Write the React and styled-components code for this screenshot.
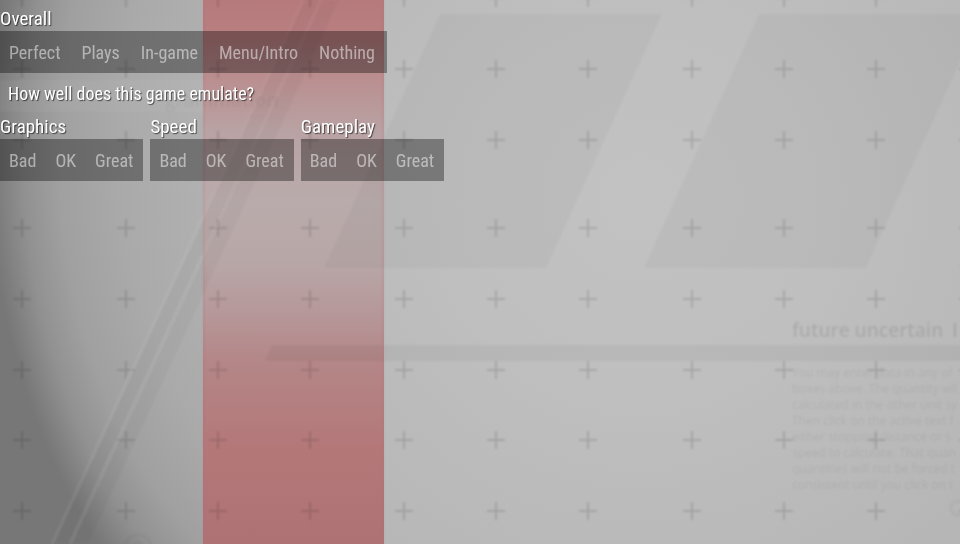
import React from 'react';
import styled, { createGlobalStyle } from 'styled-components';

const OVERALL = ['Perfect', 'Plays', 'In-game', 'Menu/Intro', 'Nothing'];
const RATING = ['Bad', 'OK', 'Great'];
const CATEGORIES = ['Graphics', 'Speed', 'Gameplay'];

const CROSS_X = [22, 126, 218, 310, 404, 496, 588, 692, 784, 876, 968];
const CROSS_Y = [-2, 69, 140, 228, 299, 370, 440, 511];

const SMALL_PRINT = [
  'You may enter data in any of',
  'boxes above. The quantity wil',
  'calculated in the other unit sy',
  'Then click on the active text f',
  'either stopping distance or s',
  'speed to calculate. That quan',
  'quantities will not be forced t',
  'consistent until you click on t',
];

const Backdrop = () => (
  <Canvas viewBox="0 0 960 544" preserveAspectRatio="xMinYMin slice" aria-hidden="true">
    <defs>
      <radialGradient id="base" gradientUnits="userSpaceOnUse" cx="640" cy="200" r="480">
        <stop offset="0" stopColor="#c2c2c2" />
        <stop offset="0.4" stopColor="#bfbfbf" />
        <stop offset="1" stopColor="#b5b5b5" />
      </radialGradient>
      <radialGradient
        id="shade"
        gradientUnits="userSpaceOnUse"
        cx="0"
        cy="0"
        r="442"
        gradientTransform="translate(430 150) scale(1 1.35)"
      >
        <stop offset="0.5" stopColor="#b1b1b1" />
        <stop offset="0.7" stopColor="#aaaaaa" />
        <stop offset="0.84" stopColor="#a0a0a0" />
        <stop offset="0.92" stopColor="#919191" />
        <stop offset="0.98" stopColor="#7d7d7d" />
        <stop offset="1" stopColor="#777777" />
      </radialGradient>
      <linearGradient id="red" x1="0" y1="0" x2="0" y2="1">
        <stop offset="0" stopColor="#b67a7c" />
        <stop offset="0.07" stopColor="#b87f81" />
        <stop offset="0.15" stopColor="#ba9091" />
        <stop offset="0.24" stopColor="#b9a2a3" />
        <stop offset="0.37" stopColor="#b9abab" />
        <stop offset="0.48" stopColor="#b8a7a7" />
        <stop offset="0.58" stopColor="#b69799" />
        <stop offset="0.66" stopColor="#b48788" />
        <stop offset="0.82" stopColor="#b47879" />
        <stop offset="1" stopColor="#af7274" />
      </linearGradient>
      <filter id="soft">
        <feGaussianBlur stdDeviation="1" />
      </filter>
    </defs>
    <rect width="960" height="544" fill="url(#base)" />
    <rect width="203" height="544" fill="url(#shade)" />
    <rect x="203" width="181" height="544" fill="url(#red)" />
    <g filter="url(#soft)">
      <path d="M204 0V544M383 0V544" stroke="#b46a6c" strokeOpacity="0.2" strokeWidth="2" />
      <path d="M0 80H203V112H0Z" fill="#fff" fillOpacity="0.04" />
      <g fill="#000" fillOpacity="0.03">
        <path d="M440 14H662L546 268H324Z" />
        <path d="M759 14H982L866 268H644Z" />
        <path d="M1078 14H1300L1184 268H958Z" />
        <path d="M272 345H970V361H265Z" fillOpacity="0.045" />
        <path d="M52 544L303 0H339L88 544Z" />
      </g>
      <path d="M52 544L203 217M70 544L203 255" stroke="#fff" strokeOpacity="0.1" strokeWidth="2" />
      <path d="M203 217L303 0M203 255L321 0" stroke="#fff" strokeOpacity="0.05" strokeWidth="2" />
      <g fill="none" stroke="#000" strokeOpacity="0.03" strokeWidth="4">
        <circle cx="138" cy="548" r="13" />
        <circle cx="138" cy="548" r="6" />
        <circle cx="958" cy="508" r="7" />
      </g>
      <g stroke="#000" strokeOpacity="0.13" strokeWidth="2">
        {CROSS_Y.map((y) =>
          CROSS_X.map((x) => <path key={`${x}-${y}`} d={`M${x - 9} ${y}h18M${x} ${y - 9}v18`} />)
        )}
      </g>
      <Ghost x="165" y="107" $size={19} $weight={600} $opacity={0.05}>grammation</Ghost>
      <Ghost x="792" y="337" $size={19} $weight={600} $opacity={0.1}>future uncertain</Ghost>
      <Ghost x="952" y="337" $size={19} $weight={600} $opacity={0.1}>I</Ghost>
      {SMALL_PRINT.map((line, i) => (
        <Ghost key={line} x="792" y={377 + i * 16} $size={12} $weight={400} $opacity={0.07}>
          {line}
        </Ghost>
      ))}
    </g>
  </Canvas>
);

const ChoiceStrip = ({ label, choices, wide }) => (
  <Group role="group" aria-label={label}>
    <Label>{label}</Label>
    <Strip>
      {choices.map((choice) => (
        <Choice key={choice} type="button" $wide={wide}>{choice}</Choice>
      ))}
    </Strip>
  </Group>
);

class App extends React.Component {
  render() {
    return (
      <Wrapper>
        <GlobalStyle />
        <Backdrop />
        <Form>
          <ChoiceStrip label="Overall" choices={OVERALL} wide />
          <Hint>How well does this game emulate?</Hint>
          <Categories>
            {CATEGORIES.map((name) => (
              <ChoiceStrip key={name} label={name} choices={RATING} />
            ))}
          </Categories>
        </Form>
      </Wrapper>
    );
  }
}

const GlobalStyle = createGlobalStyle`
  body {
    margin: 0;
    background-color: #bbb;
    font-family: 'Roboto Condensed', 'Liberation Sans Narrow', Roboto, sans-serif;
  }
`;

const Wrapper = styled.div`
  position: relative;
  min-height: 100vh;
  overflow: hidden;
`;

const Canvas = styled.svg`
  position: absolute;
  top: 0;
  left: 0;
  width: 100%;
  height: 100%;
`;

const Ghost = styled.text`
  font-family: 'Open Sans', sans-serif;
  font-size: ${(props) => props.$size}px;
  font-weight: ${(props) => props.$weight};
  fill: #000;
  fill-opacity: ${(props) => props.$opacity};
`;

const Form = styled.main`
  position: relative;
  display: flex;
  flex-direction: column;
  align-items: flex-start;
  padding-top: 6px;
  will-change: transform;
`;

const Group = styled.div`
  display: flex;
  flex-direction: column;
  align-items: flex-start;
`;

const Label = styled.div`
  font-size: 19px;
  line-height: 25px;
  color: #fff;
  text-shadow: 1px 1px 1px rgba(0, 0, 0, 0.6);
`;

const Strip = styled.div`
  display: flex;
  background-color: rgba(0, 0, 0, 0.35);
`;

const Choice = styled.button`
  height: 42px;
  padding: 0 ${(props) => (props.$wide ? 12 : 10)}px 0 9px;
  border: 0;
  background: none;
  font-family: inherit;
  font-size: 18px;
  color: rgba(255, 255, 255, 0.5);
  cursor: pointer;
`;

const Hint = styled.p`
  margin: 0;
  padding: 0 8px;
  font-size: 18px;
  line-height: 41px;
  color: #fff;
  text-shadow: 1px 1px 1px rgba(0, 0, 0, 0.6);
`;

const Categories = styled.div`
  display: flex;
  gap: 7px;
`;

export default App;
